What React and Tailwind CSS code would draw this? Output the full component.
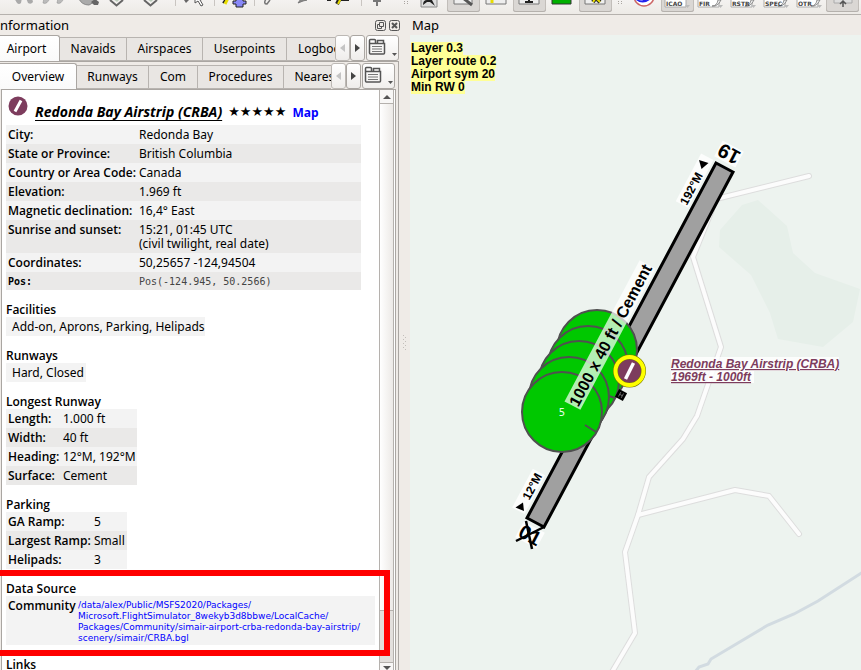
import React from "react";

const ui = "font-['Noto_Sans','Open_Sans',sans-serif]";

/* ---------- toolbar ---------- */

function Tool({ x, label, pressed, children }) {
  return (
    <button
      aria-label={label}
      className={
        "h-3 w-[33px] shrink-0 overflow-hidden rounded-b-[3px] " +
        (pressed ? "bg-[#dad7d4] shadow-[inset_0_-1px_0_#b5b1ad,inset_1px_0_0_#c2beba,inset_-1px_0_0_#c2beba]" : "")
      }
    >
      <svg className="block h-3 w-[33px]" viewBox={`${x} 0 33 12`} fill="none">
        {children}
      </svg>
    </button>
  );
}

const Sep = ({ wide }) => (
  <span className={"flex h-3 shrink-0 justify-center pb-1.5 " + (wide ? "w-2" : "w-[5px]")}>
    <span className="h-1.5 w-px bg-[#c9c5c1]" />
  </span>
);

const Grip = () => (
  <svg className="h-3 w-4 shrink-0" viewBox="0 0 16 12" fill="#aaa6a1">
    <path d="M6 1h1v1h-1zM9 1h1v1h-1zM6 3h1v1h-1zM9 3h1v1h-1z" />
  </svg>
);

function AirspaceTool({ x, text, pressed }) {
  return (
    <Tool x={x} label={text} pressed={pressed}>
      <path d={`M${x + 4} -2h21v9h-21z`} fill="#fff" stroke="#aaa" />
      {!pressed && <path d={`M${x + 18} 6q5 0 6-6l3 0q-2 5-6 6z`} fill="#eee" stroke="#777" strokeWidth=".8" />}
      <path d={`M${x + 24} 5h5l-2.500 3z`} fill="#bbb" />
      <text
        x={x + 5}
        y="6"
        fill="#444"
        className="font-['DejaVu_Sans'] text-[6px] font-bold"
      >
        {text}
      </text>
    </Tool>
  );
}

function Toolbar() {
  return (
    <div role="toolbar" className="flex h-[15px] shrink-0 items-start overflow-hidden border-b border-[#b5b1ad] bg-gradient-to-b from-[#f4f2f0] to-[#edeae6]">
      <span className="w-1.5 shrink-0" />
      <Tool x={6} label="Back">
        <path d="M14 -2l3 5q2 2 4 0l1-5zM26 -2l2 5q3 2 5-1l-1-4z" fill="#aaa" />
      </Tool>
      <Tool x={39} label="Forward">
        <path d="M43 3q4 2 7-5h-6zM57 3q4 2 7-5h-6z" fill="#bbb" stroke="#999" strokeWidth=".6" />
      </Tool>
      <Tool x={72} label="Zoom">
        <path d="M79 -1q3 6 10 6l7-4v-3z" fill="#aaa" stroke="#888" />
        <path d="M91 2l4-3 4 3-1 3h-4z" fill="#666" />
      </Tool>
      <Tool x={105} label="Down">
        <path d="M110 0l6.500 5.500 6.500-5.500" stroke="#666" strokeWidth="2" />
        <path d="M113 -1l4 3 3-3z" fill="#bcb" />
      </Tool>
      <Tool x={138} label="Down further">
        <path d="M144 0l6.500 5.500 6.500-5.500" stroke="#666" strokeWidth="2" />
        <path d="M147 -1l4 3 3-3z" fill="#bcb" />
      </Tool>
      <Sep wide />
      <Tool x={179} label="Select">
        <path d="M184 0h5l-3 3z" fill="#666" />
        <path d="M195 -2v5l3-2 3 5 2-1-3-5 4-1z" fill="#fff" stroke="#555" />
      </Tool>
      <Sep />
      <Tool x={217} label="Add">
        <path d="M223 3l3-4 1 1" stroke="#222" strokeWidth="2" />
        <path d="M225 4l3-6" stroke="#e8dc00" strokeWidth="3" />
        <path d="M236 -2h7v3h3v3h-3v3h-7v-3h-3v-3h3z" fill="#8888f8" stroke="#222" />
      </Tool>
      <Sep wide />
      <Tool x={258} label="Undo">
        <path d="M266 -1q-3 5 1 5l3-4" stroke="#777" strokeWidth="1.500" />
      </Tool>
      <Tool x={291} label="Redo">
        <path d="M298 3l3-4 6 1-4 1z" fill="#888" stroke="#777" />
      </Tool>
      <Tool x={324} label="Route">
        <path d="M327 0h4M338 0h11" stroke="#222" strokeWidth="2" />
        <path d="M337 4l3-6" stroke="#222" strokeWidth="4" />
        <path d="M338 4l3-6" stroke="#e8dc00" strokeWidth="2" />
      </Tool>
      <Sep wide />
      <Tool x={365} label="Up">
        <path d="M377 -1v7M373 1h8" stroke="#777" strokeWidth="2" />
      </Tool>
      <Grip />
      <Tool x={414} label="Airports">
        <path d="M421 -2h16v9h-16z" fill="#ddd" stroke="#888" />
        <path d="M423 5q0-5 4-5h5l3 6-5-4-3 0z" fill="#222" />
      </Tool>
      <Tool x={446} label="Details" pressed>
        <path d="M453 -2h18v6h-18z" fill="#eee" stroke="#777" />
        <path d="M462 -2l9 7" stroke="#555" strokeWidth="3" />
      </Tool>
      <Tool x={479} label="Navaids">
        <path d="M485 -2h20v6h-20z" fill="#eee" stroke="#777" />
        <path d="M491 -2v5" stroke="#e8dc00" strokeWidth="3" />
      </Tool>
      <Tool x={512} label="Waypoints" pressed>
        <path d="M518 -2h20v6h-20z" fill="#eee" stroke="#777" />
        <path d="M524 2h8M528 2v-4" stroke="#222" strokeWidth="2" />
      </Tool>
      <Tool x={545} label="Terrain">
        <path d="M551 -2h19v6h-19z" fill="#00b000" stroke="#333" />
      </Tool>
      <Tool x={578} label="Parking" pressed>
        <path d="M584 -2h20v6h-20z" fill="#eee" stroke="#777" />
        <path d="M592 2l2-3M599 2l-3-3" stroke="#222" strokeWidth="4" />
        <path d="M592 2l2-3M599 2l-3-3" stroke="#e8dc00" strokeWidth="2" />
      </Tool>
      <Grip />
      <Tool x={627} label="Airspaces">
        <circle cx="643" cy="-4" r="10" fill="#fff" stroke="#c66" strokeWidth="1.500" />
        <path d="M635 -1q7 6 15-1l-4 0-3 3-3-4-2 2z" fill="#88f" stroke="#22e" strokeWidth="1.500" />
      </Tool>
      <AirspaceTool x={660} text="ICAO" pressed />
      <AirspaceTool x={693} text="FIR" />
      <AirspaceTool x={726} text="RSTR" />
      <AirspaceTool x={759} text="SPEC" />
      <AirspaceTool x={792} text="OTR" />
      <Tool x={825} label="Altitude" pressed>
        <path d="M833 -2h18v5h-18z" fill="#ddd" stroke="#aaa" />
        <path d="M842 7v-6M839 4l3-3 3 3" stroke="#555" strokeWidth="1.500" />
      </Tool>
    </div>
  );
}

/* ---------- tabs ---------- */

function TabRow({ tabs }) {
  return (
    <div className="flex h-[26px] shrink-0 items-stretch pr-px">
      <div role="tablist" className="flex min-w-0 flex-1 items-stretch overflow-hidden">
        {tabs.map(([name, width], i) => (
          <button
            key={name}
            role="tab"
            aria-selected={i === 0}
            className={
              "shrink-0 whitespace-nowrap text-[12px] leading-[14px] " +
              width +
              (i === 0
                ? " rounded-tr-[3px] border-t border-r border-[#aaa6a2] bg-gradient-to-b from-white to-[#fafafa]"
                : " mt-0.5 border-t border-r border-b border-[#b8b4b0] bg-[#e9e6e3]")
            }
          >
            {name}
          </button>
        ))}
      </div>
      <button aria-label="Scroll left" className="flex w-[15px] items-center justify-center rounded-[3px] border border-[#bcb8b4] bg-gradient-to-b from-white to-[#efedeb]">
        <svg width="5" height="8" viewBox="0 0 5 8" fill="#c4c4c4"><path d="M5 0v8L0 4z" /></svg>
      </button>
      <button aria-label="Scroll right" className="flex w-[15px] items-center justify-center rounded-[3px] border border-[#aaa6a2] bg-gradient-to-b from-white to-[#efedeb]">
        <svg width="5" height="8" viewBox="0 0 5 8" fill="#444"><path d="M0 0v8l5-4z" /></svg>
      </button>
      <button aria-label="Tab menu" className="ml-px flex w-[33px] items-start rounded-[3px] border border-[#aaa6a2] bg-gradient-to-b from-white to-[#f1efed]">
        <svg width="31" height="24" viewBox="0 0 31 24" fill="none">
          <path d="M2.500 6.500v10.500q0 1 1 1h13q1 0 1-1v-9.500h-15M2.500 7v-2.500q0-1 1-1h4q1 0 1 1v3M10.500 7v-2.500h6v3" stroke="#555" strokeWidth="1.500" />
          <path d="M5 10.500h10M5 13h10M5 15.500h10" stroke="#777" />
          <path d="M25 17h5l-2.500 3z" fill="#555" />
        </svg>
      </button>
    </div>
  );
}

/* ---------- information panel ---------- */

const label = "font-['Open_Sans','Noto_Sans',sans-serif] font-semibold";

function Data({ rows, labelWidth, className }) {
  return (
    <table className={"table-fixed border-collapse text-[12px] leading-[14px] " + className}>
      <tbody>
        {rows.map(([name, value, mono], i) => (
          <tr key={name} className={i % 2 ? "bg-[#eae9e8]" : "bg-[#f3f3f3]"}>
            <th
              scope="row"
              className={
                "whitespace-nowrap pt-[3px] pl-0.5 text-left align-top " +
                labelWidth +
                (mono ? " pb-px font-['DejaVu_Sans_Mono'] text-[10px]" : " pb-0.5 " + label)
              }
            >
              {name}
            </th>
            <td className={"whitespace-pre pt-[3px] align-top " + (mono ? "pb-px font-['DejaVu_Sans_Mono'] text-[10px] text-[#444]" : "pb-0.5")}>
              {value}
            </td>
          </tr>
        ))}
      </tbody>
    </table>
  );
}

const Heading = ({ children }) => (
  <h3 className={"mt-3 h-[15px] text-[12px] leading-[15px] " + label}>{children}</h3>
);

const Note = ({ children, className }) => (
  <p className={"h-[19px] whitespace-nowrap bg-[#f3f3f3] pl-1.5 text-[12px] leading-[19px] " + className}>{children}</p>
);

function Overview() {
  return (
    <div className="min-w-0 flex-1 overflow-hidden pl-1">
      <div className="flex h-[35px] items-start whitespace-nowrap pl-0.5">
        <svg className="mt-1.5 size-5 shrink-0" viewBox="0 0 20 20">
          <circle cx="10" cy="10" r="9.500" fill="#7d3c5d" />
          <path d="M7 15.500L13 4.500" stroke="#fff" strokeWidth="3" />
        </svg>
        <h2 className="mt-3 ml-[7px] text-[14px] leading-[20px] font-bold italic underline underline-offset-3">
          Redonda Bay Airstrip (CRBA)
        </h2>
        <span className="mt-3 ml-1.5 font-['DejaVu_Sans'] text-[13px] leading-[20px]">★★★★★</span>
        <a href="#map" className="mt-3 ml-1.5 text-[12px] leading-[21px] font-bold text-[#0000ff]">Map</a>
      </div>
      <Data
        className="w-[355px]"
        labelWidth="w-[133px]"
        rows={[
          ["City:", "Redonda Bay"],
          ["State or Province:", "British Columbia"],
          ["Country or Area Code:", "Canada"],
          ["Elevation:", "1.969 ft"],
          ["Magnetic declination:", "16,4° East"],
          ["Sunrise and sunset:", "15:21, 01:45 UTC\n(civil twilight, real date)"],
          ["Coordinates:", "50,25657 -124,94504"],
          ["Pos:", "Pos(-124.945, 50.2566)", true],
        ]}
      />
      <Heading>Facilities</Heading>
      <Note className="w-[199px]">Add-on, Aprons, Parking, Helipads</Note>
      <Heading>Runways</Heading>
      <Note className="w-20">Hard, Closed</Note>
      <Heading>Longest Runway</Heading>
      <Data
        className="w-[131px]"
        labelWidth="w-[57px]"
        rows={[["Length:", "1.000 ft"], ["Width:", "40 ft"], ["Heading:", "12°M, 192°M"], ["Surface:", "Cement"]]}
      />
      <Heading>Parking</Heading>
      <Data
        className="w-[121px]"
        labelWidth="w-[88px]"
        rows={[["GA Ramp:", "5"], ["Largest Ramp:", "Small"], ["Helipads:", "3"]]}
      />
      <Heading>Data Source</Heading>
      <div className="flex h-[49px] w-[369px] bg-[#f3f3f3] pl-0.5">
        <strong className={"w-[70px] shrink-0 pt-[3px] text-[12px] leading-[14px] " + label}>Community</strong>
        <a href="#source" className="pt-1 font-['DejaVu_Sans'] text-[9px] leading-[11px] whitespace-nowrap text-[#0000ff]">
          /data/alex/Public/MSFS2020/Packages/
          <br />
          Microsoft.FlightSimulator_8wekyb3d8bbwe/LocalCache/
          <br />
          Packages/Community/simair-airport-crba-redonda-bay-airstrip/
          <br />
          scenery/simair/CRBA.bgl
        </a>
      </div>
      <Heading>Links</Heading>
    </div>
  );
}

function ScrollBar() {
  return (
    <div className="flex w-[15px] shrink-0 flex-col border-x border-[#b5b1ad] bg-[#e3e0dd]">
      <button aria-label="Scroll up" className="flex h-3.5 shrink-0 items-center justify-center border-b border-[#b5b1ad] bg-[#f8f7f6]">
        <svg width="8" height="4" viewBox="0 0 8 4" fill="#555"><path d="M0 4h8L4 0z" /></svg>
      </button>
      <div className="min-h-0 flex-[10] border-b border-[#b5b1ad] bg-gradient-to-r from-white to-[#ece9e6]" />
      <div className="min-h-0 flex-1" />
      <button aria-label="Scroll down" className="flex h-2 shrink-0 items-end justify-center border-t border-[#b5b1ad] bg-[#f8f7f6]">
        <svg width="8" height="4" viewBox="0 0 8 4" fill="#555"><path d="M0 0h8L4 4z" /></svg>
      </button>
    </div>
  );
}

function InfoPanel() {
  return (
    <section className="relative flex w-[400px] shrink-0 flex-col">
      <header className="flex h-5 shrink-0 items-center justify-between">
        <h1 className="text-[13px] leading-5">nformation</h1>
        <span className="flex gap-[3px]">
          <button aria-label="Float panel" className="size-[11px]">
            <svg className="block size-[11px]" viewBox="0 0 11 11" fill="none" stroke="#555">
              <rect x=".5" y=".5" width="10" height="10" rx="2" />
              <path d="M4.500 2.500h4v4h-4zM4 4.500h-1.500v4h4v-1.500" />
            </svg>
          </button>
          <button aria-label="Close panel" className="size-[11px]">
            <svg className="block size-[11px]" viewBox="0 0 11 11" fill="none" stroke="#555">
              <rect x=".5" y=".5" width="10" height="10" rx="2" />
              <path d="M3 3l5 5M8 3l-5 5" strokeWidth="2" />
            </svg>
          </button>
        </span>
      </header>
      <TabRow
        tabs={[
          ["Airport", "w-[60px] pr-1.5"],
          ["Navaids", "w-[67px]"],
          ["Airspaces", "w-[76px]"],
          ["Userpoints", "w-[84px]"],
          ["Logbook", "w-[72px]"],
        ]}
      />
      <div className="mr-px flex min-h-0 flex-1 flex-col border-t border-r border-[#aaa6a2] pt-px pr-0.5">
        <TabRow
          tabs={[
            ["Overview", "w-[77px]"],
            ["Runways", "w-[72px]"],
            ["Com", "w-[49px]"],
            ["Procedures", "w-[86px]"],
            ["Nearest", "w-[66px]"],
          ]}
        />
        <div className="ml-px flex min-h-0 flex-1 border-t border-r border-l border-[#aaa6a2] bg-white pr-px">
          <Overview />
          <ScrollBar />
        </div>
      </div>
      <div className="pointer-events-none absolute top-[555px] left-0 h-[86px] w-[390px] border-y-6 border-r-6 border-[#ff0000]" />
    </section>
  );
}

/* ---------- map ---------- */

const spots = [[597, 350], [588, 366], [579, 381], [569, 397], [562, 412]];
const roads = [
  "M809 176L716 199",
  "M712 210L693 257L721 347L697 416L683 439L649 477L638 515L625 552L635 633L612 672",
  "M638 515L735 490L769 496L799 534",
];

function MapCanvas() {
  return (
    <svg
      className="block h-full w-full font-['Liberation_Sans'] font-bold"
      viewBox="410 35 451 635"
      preserveAspectRatio="xMinYMin slice"
      fill="none"
    >
      <path
        d="M758 200L787 226L793 253L815 273L860 289L853 322L823 347L778 339L770 313L751 275L719 247L720 230L742 205Z"
        fill="#e6efe9"
      />
      <path d="M695 672L699 667L708 664L711 659L768 625L794 614L818 601L863 572" stroke="#d2dbe1" strokeWidth="3" />
      <g strokeLinecap="round" strokeLinejoin="round">
        {roads.map((d) => <path key={d} d={d} stroke="#dddddd" strokeWidth="6" />)}
        {roads.map((d) => <path key={d} d={d} stroke="#fcfcfc" strokeWidth="4" />)}
      </g>

      <path d="M716 163L733 172L544 527L527 518Z" fill="#a0a0a0" stroke="#000" strokeWidth="3" />

      <g transform="translate(695 182) rotate(-62)">
        <rect x="-26" y="-8" width="54" height="14" fill="#fff" fillOpacity=".8" />
        <text x="-25" y="4" fill="#000" fontSize="12">192°M</text>
      </g>
      <path d="M699 160L708.500 163L701.500 169Z" fill="#000" />
      <g transform="translate(530 491) rotate(-62)">
        <rect x="-23" y="-8" width="44" height="14" fill="#fff" fillOpacity=".8" />
        <text x="-9" y="4" fill="#000" fontSize="12">12°M</text>
      </g>
      <path d="M515.500 507.500L523 502.500L524 511Z" fill="#000" />

      <g transform="translate(729 154) rotate(208)">
        <rect x="-12" y="-9" width="24" height="18" fill="#fff" fillOpacity=".8" />
        <text y="7" fill="#000" fontSize="20" textAnchor="middle">19</text>
      </g>
      <g transform="translate(530 535) rotate(28)">
        <rect x="-12" y="-9" width="24" height="18" fill="#fff" fillOpacity=".8" />
        <text y="7" fill="#000" fontSize="20" textAnchor="middle">01</text>
      </g>
      <path d="M516 541L544 527M526 521L532 549" stroke="#000" strokeWidth="2.500" />

      {spots.map(([cx, cy]) => (
        <circle key={cx} cx={cx} cy={cy} r="40" fill="#00c800" stroke="#505050" strokeWidth="2" />
      ))}
      <path d="M585 425L596 432M609 396L615 398" stroke="#505050" strokeWidth="2" />
      <text x="562" y="416" fill="#e6ffe6" fontSize="10" textAnchor="middle" className="font-['DejaVu_Sans'] font-normal">5</text>

      <g transform="translate(610 335) rotate(-62)">
        <rect x="-80" y="-9" width="160" height="18" fill="#fff" fillOpacity=".7" />
        <text y="6" fill="#000" fontSize="16" textAnchor="middle">1000 x 40 ft / Cement</text>
      </g>

      <g transform="translate(621 395) rotate(28)">
        <rect x="-4.500" y="-4.500" width="9" height="9" fill="#000" />
        <path d="M-1.500 -2.500v5M1.500 -2.500v5M-1.500 0h3" stroke="#777" strokeWidth=".8" />
      </g>
      <circle cx="629.500" cy="371" r="14" fill="#7d3c5d" stroke="#777700" strokeWidth="5" />
      <circle cx="629.500" cy="371" r="14" stroke="#ffff00" strokeWidth="4" />
      <path d="M625.500 379L633.500 363" stroke="#fff" strokeWidth="3.500" />

      <rect x="671" y="357" width="168" height="14" fill="#fff" fillOpacity=".8" />
      <rect x="671" y="371" width="83" height="12" fill="#fff" fillOpacity=".8" />
      <g fill="#7d3c5d" fontSize="12" fontStyle="italic" textDecoration="underline">
        <text x="671" y="368">Redonda Bay Airstrip (CRBA)</text>
        <text x="671" y="381">1969ft - 1000ft</text>
      </g>
    </svg>
  );
}

function MapPanel() {
  return (
    <section className="flex min-w-0 flex-1">
      <span className="flex w-[10px] shrink-0 items-center justify-center">
        <svg width="4" height="16" viewBox="0 0 4 16" fill="#c2beba">
          <path d="M0 0h1v1h-1zM2 2h1v1h-1zM0 4h1v1h-1zM2 6h1v1h-1zM0 8h1v1h-1zM2 10h1v1h-1zM0 12h1v1h-1zM2 14h1v1h-1z" />
        </svg>
      </span>
      <div className="flex min-w-0 flex-1 flex-col">
        <h1 className="h-5 shrink-0 pl-0.5 text-[13px] leading-5">Map</h1>
        <div className="relative min-h-0 flex-1 bg-[#edf3ef]">
          <MapCanvas />
          <ul className="absolute top-[7px] left-px flex flex-col items-start font-['Liberation_Sans'] text-[12px] leading-[13px] font-bold">
            {["Layer 0.3", "Layer route 0.2", "Airport sym 20", "Min RW 0"].map((t) => (
              <li key={t} className="bg-[#ffff96]">{t}</li>
            ))}
          </ul>
        </div>
      </div>
    </section>
  );
}

export default function App() {
  return (
    <main className={"flex h-screen flex-col overflow-hidden bg-[#efebe7] text-black " + ui}>
      <Toolbar />
      <div className="flex min-h-0 flex-1">
        <InfoPanel />
        <MapPanel />
      </div>
    </main>
  );
}
